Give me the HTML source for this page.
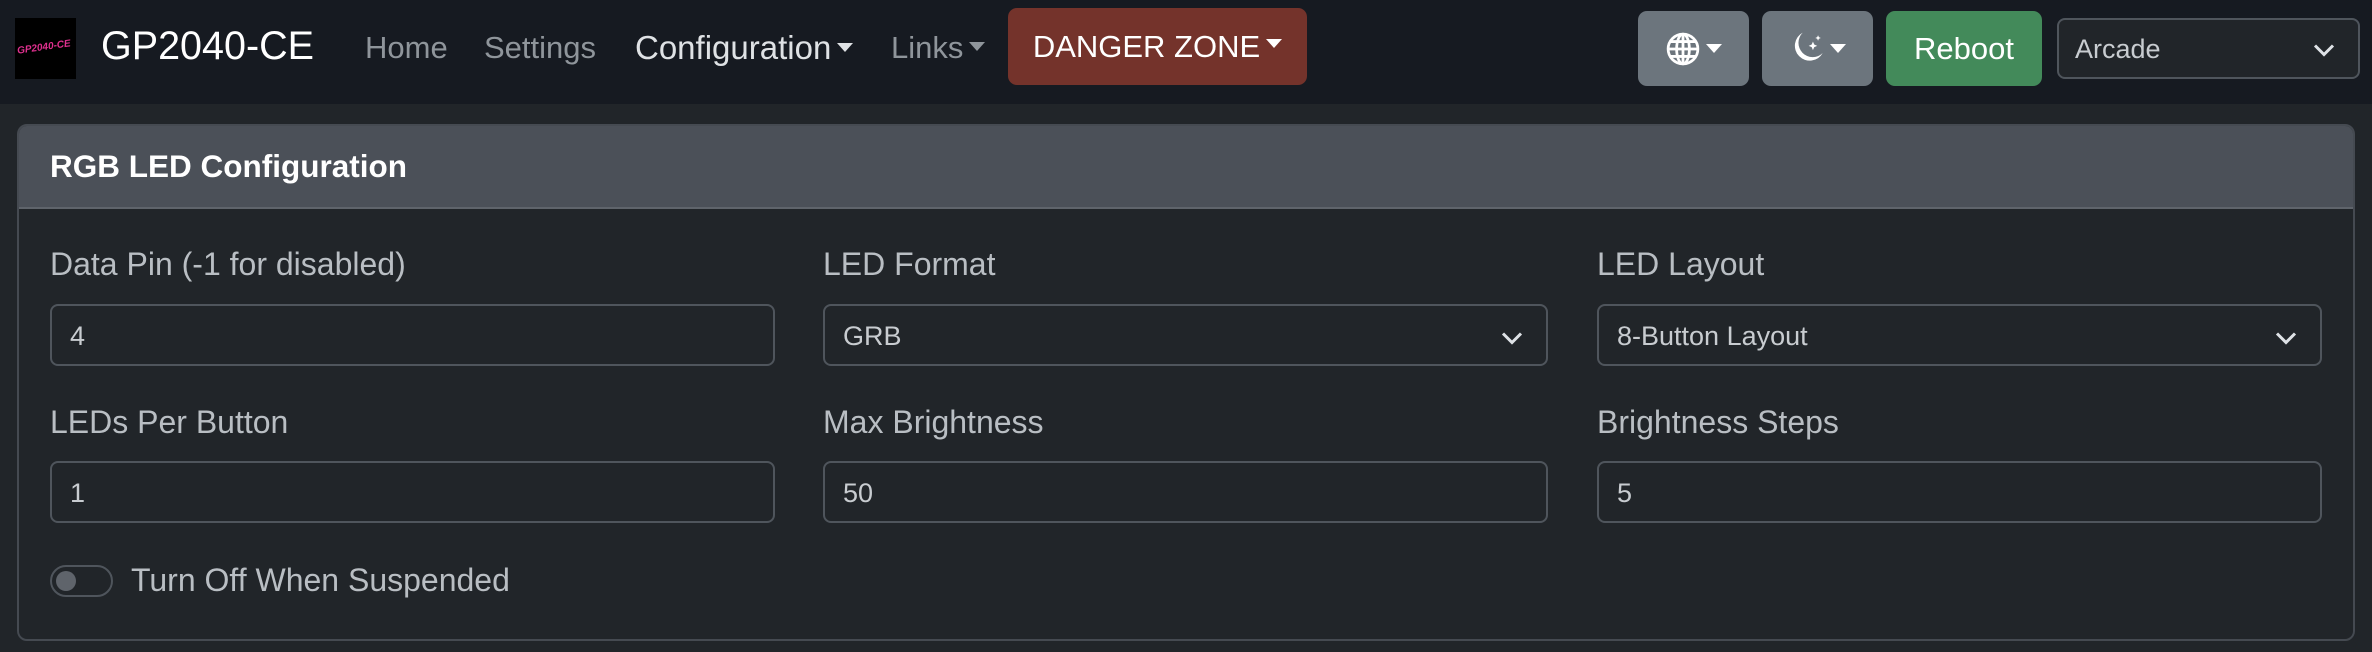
<!DOCTYPE html>
<html><head><meta charset="utf-8"><style>
*{box-sizing:border-box;margin:0;padding:0}
body{width:2372px;height:652px;background:#212529;font-family:"Liberation Sans",sans-serif;color:#dee2e6;position:relative;overflow:hidden}
.nav{position:absolute;left:0;top:0;width:2372px;height:104px;background:#161a21}
.a{position:absolute;white-space:nowrap}
.nl{font-size:31px;color:#8f959b;top:30px}
.car{display:inline-block;width:0;height:0;border-left:8px solid transparent;border-right:8px solid transparent;border-top:9px solid currentColor;vertical-align:middle;margin-left:6px;position:relative;top:-3px}
.btn{position:absolute;border-radius:9px;top:11px;height:75px;color:#fff;display:flex;align-items:center;justify-content:center}
.card{position:absolute;left:17px;top:124px;width:2338px;height:517px;border:2px solid #454a51;border-radius:10px;overflow:hidden}
.ch{height:83px;background:#4b5058;border-bottom:2px solid #5f646b}
.lbl{position:absolute;font-size:32px;color:#b9bec3}
.inp{position:absolute;width:725px;height:62px;border:2px solid #4f555c;border-radius:8px;font-size:27px;color:#c8ccd0;padding:15px 0 0 18px}
.chev{position:absolute;right:22px;top:20px}
</style></head><body>
<div class="nav"></div>
<div class="a" style="left:15px;top:18px;width:61px;height:61px;background:#000"><span style="position:absolute;left:2px;top:24px;font-size:10px;color:#e0308f;font-style:italic;font-weight:bold;transform:rotate(-8deg)">GP2040-CE</span></div>
<div class="a" style="left:101px;top:24px;font-size:39.5px;color:#fff">GP2040-CE</div>
<div class="a nl" style="left:365px">Home</div>
<div class="a nl" style="left:484px">Settings</div>
<div class="a nl" style="left:635px;color:#dfe2e5;font-size:33px;top:29px">Configuration<span class="car"></span></div>
<div class="a nl" style="left:891px">Links<span class="car"></span></div>
<div class="btn" style="left:1008px;width:299px;top:8px;height:77px;background:#74332b;font-size:31px">DANGER ZONE<span class="car" style="color:#fff"></span></div>
<div class="btn" style="left:1638px;width:111px;background:#6c757d">
<svg width="34" height="34" viewBox="0 0 16 16" fill="none" stroke="#fff" stroke-width="1.3"><circle cx="8" cy="8" r="7"/><ellipse cx="8" cy="8" rx="3" ry="7"/><path d="M8 1v14M1 8h14M2 4.5h12M2 11.5h12"/></svg><span class="car" style="color:#fff;top:0"></span></div>
<div class="btn" style="left:1762px;width:111px;background:#6c757d">
<svg width="34" height="34" viewBox="0 0 16 16" fill="#fff"><path d="M6 .3a7 7 0 1 0 9.4 9.6A6 6 0 0 1 6 .3z"/><path d="M10.8 4.5l.6 1.4 1.4.6-1.4.6-.6 1.4-.6-1.4-1.4-.6 1.4-.6zM13.2 1.5l.4.9.9.4-.9.4-.4.9-.4-.9-.9-.4.9-.4z"/></svg><span class="car" style="color:#fff;top:0"></span></div>
<div class="btn" style="left:1886px;width:156px;background:#438a5a;font-size:31px">Reboot</div>
<div class="a" style="left:2057px;top:18px;width:303px;height:61px;border:2px solid #4f555c;border-radius:8px;background:#212529;font-size:27px;color:#c8ccd0;padding:14px 0 0 16px">Arcade<svg class="chev" style="top:18px" width="24" height="24" viewBox="0 0 16 16" fill="none" stroke="#dee2e6" stroke-width="2"><path d="M2 5l6 6 6-6"/></svg></div>
<div class="card"><div class="ch"></div></div>
<div class="a" style="left:50px;top:148px;font-size:31.5px;font-weight:bold;color:#fff">RGB LED Configuration</div>
<div class="lbl" style="left:50px;top:246px">Data Pin (-1 for disabled)</div>
<div class="lbl" style="left:823px;top:246px">LED Format</div>
<div class="lbl" style="left:1597px;top:246px">LED Layout</div>
<div class="inp" style="left:50px;top:304px">4</div>
<div class="inp" style="left:823px;top:304px">GRB<svg class="chev" width="24" height="24" viewBox="0 0 16 16" fill="none" stroke="#dee2e6" stroke-width="2"><path d="M2 5l6 6 6-6"/></svg></div>
<div class="inp" style="left:1597px;top:304px">8-Button Layout<svg class="chev" width="24" height="24" viewBox="0 0 16 16" fill="none" stroke="#dee2e6" stroke-width="2"><path d="M2 5l6 6 6-6"/></svg></div>
<div class="lbl" style="left:50px;top:404px">LEDs Per Button</div>
<div class="lbl" style="left:823px;top:404px">Max Brightness</div>
<div class="lbl" style="left:1597px;top:404px">Brightness Steps</div>
<div class="inp" style="left:50px;top:461px">1</div>
<div class="inp" style="left:823px;top:461px">50</div>
<div class="inp" style="left:1597px;top:461px">5</div>
<div class="a" style="left:50px;top:565px;width:63px;height:32px;border:2px solid #4f555c;border-radius:16px"><div style="position:absolute;left:4px;top:4px;width:20px;height:20px;border-radius:50%;background:#5f646b"></div></div>
<div class="lbl" style="left:131px;top:562px">Turn Off When Suspended</div>
</body></html>
